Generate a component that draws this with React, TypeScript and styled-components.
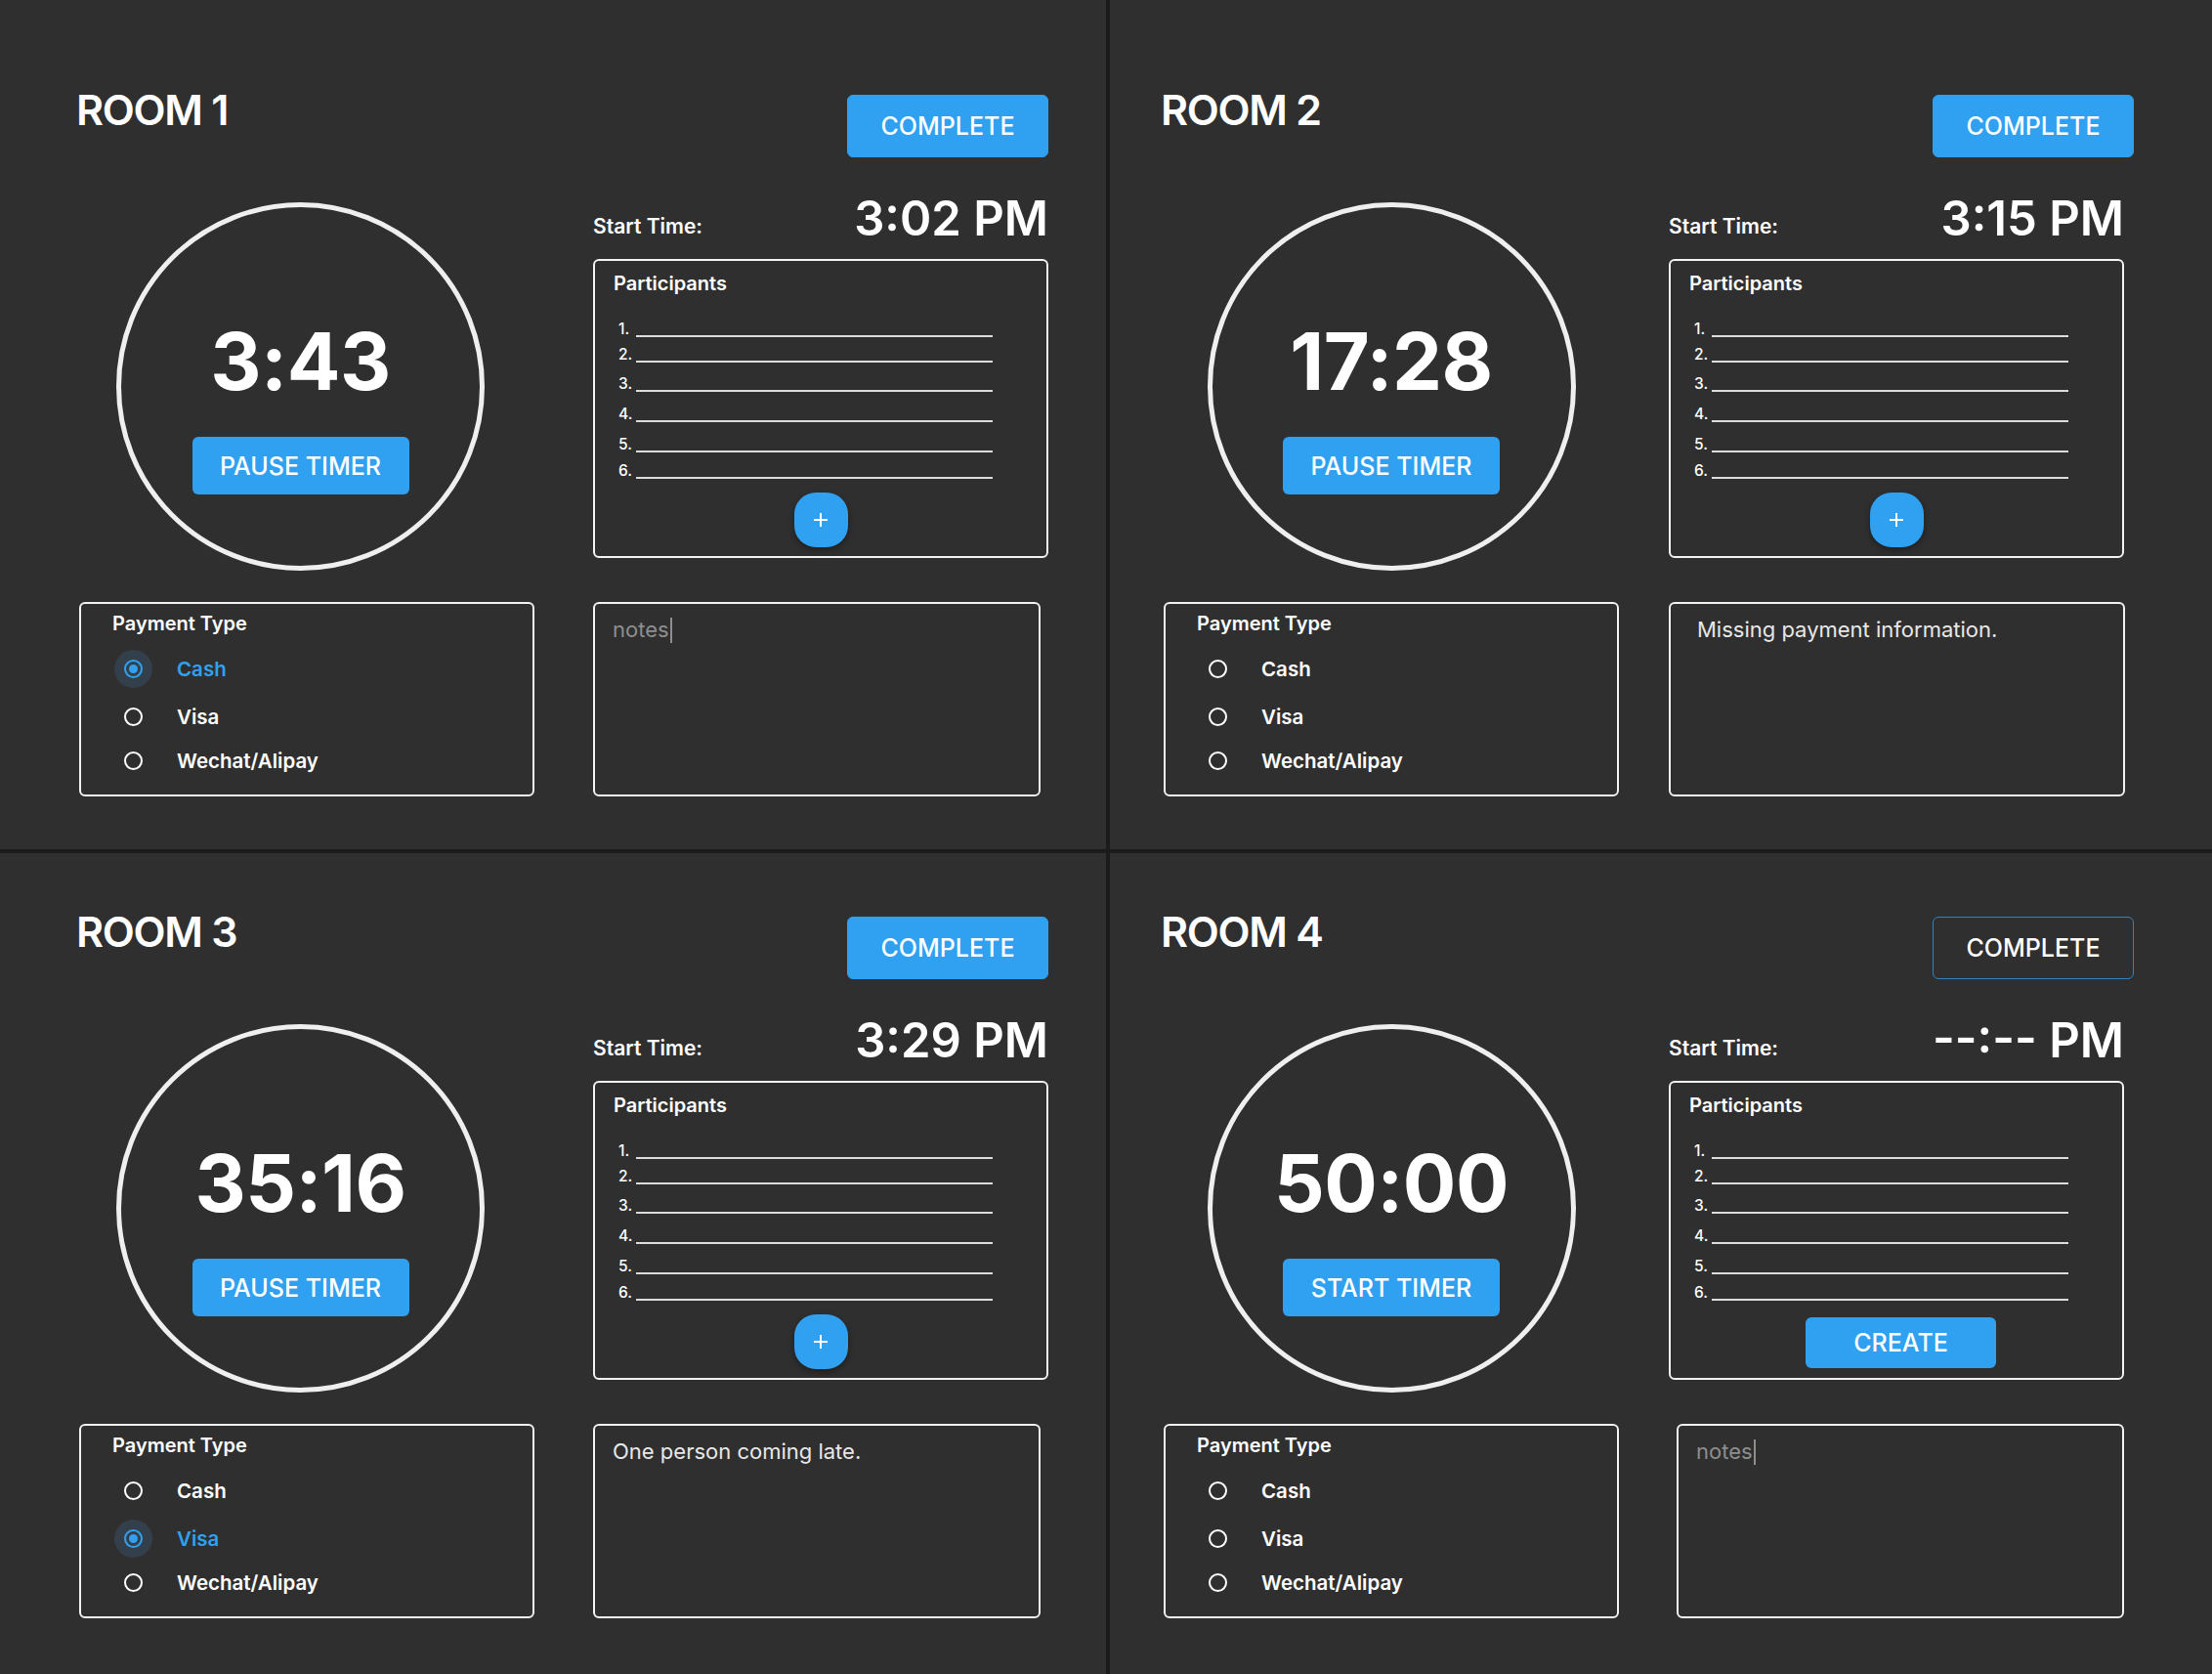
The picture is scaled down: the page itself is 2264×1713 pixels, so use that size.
import React from 'react'
import styled, { createGlobalStyle } from 'styled-components'

const GlobalStyle = createGlobalStyle`
  html, body {
    margin: 0;
    padding: 0;
    background: #1b1b1b;
  }
  body {
    font-family: Inter, "Noto Sans", "Liberation Sans", sans-serif;
    color: #ffffff;
  }
`

const BLUE = '#30a0f0'

const Board = styled.div`
  display: grid;
  grid-template-columns: 1132px 1fr;
  grid-template-rows: 869px 1fr;
  gap: 4px;
  width: 2264px;
  height: 1713px;
  background: #1b1b1b;
`

const RoomCell = styled.section<{ $padTop: number; $padLeft: number }>`
  background: #2f2f2f;
  padding: ${p => p.$padTop}px 0 0 ${p => p.$padLeft}px;
  box-sizing: border-box;
  overflow: hidden;
`

const Header = styled.div<{ $width: number }>`
  display: flex;
  justify-content: space-between;
  align-items: flex-start;
  width: ${p => p.$width}px;
  height: 64px;
  margin-bottom: 38px;
`

const Title = styled.h1`
  margin: -6px 0 0 -3px;
  font-size: 43px;
  line-height: 1;
  font-weight: 600;
  letter-spacing: -1.3px;
  color: #ffffff;
`

const CompleteButton = styled.button<{ $outlined?: boolean }>`
  width: 206px;
  height: 64px;
  border-radius: 6px;
  border: 1px solid ${p => (p.$outlined ? 'rgba(48, 160, 240, 0.75)' : BLUE)};
  background: ${p => (p.$outlined ? 'transparent' : BLUE)};
  color: #ffffff;
  font-family: Inter, sans-serif;
  font-size: 25px;
  font-weight: 500;
  text-transform: uppercase;
  padding: 0;
  cursor: pointer;
`

const Body = styled.div<{ $gap: number }>`
  display: grid;
  grid-template-columns: 466px 466px;
  column-gap: ${p => p.$gap}px;
  row-gap: 32px;
`

const TimerCell = styled.div<{ $shift: number }>`
  display: flex;
  justify-content: center;
  padding-top: 8px;
  padding-right: ${p => p.$shift}px;
`

const Dial = styled.div`
  width: 377px;
  height: 377px;
  box-sizing: border-box;
  border: 5px solid #efefef;
  border-radius: 50%;
  display: flex;
  flex-direction: column;
  align-items: center;
  padding-top: 118px;
`

const Clock = styled.div`
  font-size: 81px;
  line-height: 1;
  font-weight: 700;
  letter-spacing: -0.5px;
  color: #ffffff;
`

const TimerButton = styled.button`
  margin-top: 36px;
  width: 222px;
  height: 59px;
  border: none;
  border-radius: 6px;
  background: ${BLUE};
  color: #ffffff;
  font-family: Inter, sans-serif;
  font-size: 25px;
  font-weight: 500;
  text-transform: uppercase;
  padding: 0;
`

const RightCell = styled.div`
  display: flex;
  flex-direction: column;
`

const StartRow = styled.div`
  display: flex;
  justify-content: space-between;
  align-items: flex-end;
  height: 49px;
`

const StartLabel = styled.span`
  font-size: 21px;
  line-height: 1;
  font-weight: 600;
  margin-bottom: 6px;
  color: #ffffff;
`

const StartValue = styled.span`
  font-size: 49px;
  line-height: 1;
  font-weight: 600;
  color: #ffffff;
`

const Panel = styled.div<{ $height: number }>`
  box-sizing: border-box;
  height: ${p => p.$height}px;
  border: 2px solid #f2f2f2;
  border-radius: 6px;
`

const ParticipantsPanel = styled(Panel)`
  margin-top: 17px;
  display: flex;
  flex-direction: column;
  padding: 13px 0 0 19px;
`

const PanelTitle = styled.div`
  font-size: 20px;
  line-height: 1;
  height: 21px;
  font-weight: 600;
  color: #ffffff;
`

const SlotRow = styled.div<{ $h: number }>`
  display: flex;
  align-items: flex-end;
  height: ${p => p.$h}px;
  padding-left: 5px;
`

const SlotNumber = styled.span`
  width: 18px;
  font-size: 15.5px;
  line-height: 1;
  font-weight: 500;
  padding-bottom: 1px;
  color: #ffffff;
`

const SlotLine = styled.span`
  width: 365px;
  border-bottom: 2px solid #dcdcdc;
`

const AddButton = styled.button`
  align-self: center;
  margin: 14px 19px 0 0;
  width: 55px;
  height: 56px;
  border: none;
  border-radius: 22px;
  background: ${BLUE};
  box-shadow: 0 3px 6px rgba(0, 0, 0, 0.35);
  display: flex;
  align-items: center;
  justify-content: center;
  padding: 0;
`

const CreateButton = styled.button`
  align-self: center;
  margin: 17px 10px 0 0;
  width: 195px;
  height: 52px;
  border: none;
  border-radius: 6px;
  background: ${BLUE};
  color: #ffffff;
  font-family: Inter, sans-serif;
  font-size: 25px;
  font-weight: 500;
  padding: 0;
`

const PaymentPanel = styled(Panel)`
  padding: 10px 0 0 32px;
`

const RadioRow = styled.label<{ $mt: number }>`
  display: flex;
  align-items: center;
  margin-top: ${p => p.$mt}px;
  margin-left: 2px;
  height: 40px;
`

const RadioHalo = styled.span<{ $on: boolean }>`
  width: 39px;
  height: 39px;
  border-radius: 50%;
  background: ${p => (p.$on ? '#333f4a' : 'transparent')};
  display: flex;
  align-items: center;
  justify-content: center;
`

const RadioRing = styled.span<{ $on: boolean }>`
  width: 19px;
  height: 19px;
  box-sizing: border-box;
  border-radius: 50%;
  border: 2px solid ${p => (p.$on ? BLUE : '#ffffff')};
  display: flex;
  align-items: center;
  justify-content: center;
  &::after {
    content: '';
    display: ${p => (p.$on ? 'block' : 'none')};
    width: 9px;
    height: 9px;
    border-radius: 50%;
    background: ${BLUE};
  }
`

const RadioLabel = styled.span<{ $on: boolean }>`
  margin-left: 25px;
  font-size: 20.5px;
  font-weight: 600;
  color: ${p => (p.$on ? BLUE : '#ffffff')};
`

const NotesPanel = styled(Panel)<{ $w: number; $end: boolean; $pad: number }>`
  width: ${p => p.$w}px;
  justify-self: ${p => (p.$end ? 'end' : 'start')};
  padding: 13px 0 0 ${p => p.$pad}px;
  font-size: 22px;
  line-height: 1.2;
  font-weight: 400;
`

const NoteText = styled.span<{ $placeholder: boolean }>`
  color: ${p => (p.$placeholder ? '#8e8e8e' : '#e8e8e8')};
`

const Caret = styled.span`
  display: inline-block;
  width: 2px;
  height: 26px;
  margin-left: 1px;
  vertical-align: -6px;
  background: #8e8e8e;
`

interface RoomInfo {
  name: string
  clock: string
  action: string
  start: string
  selected: number
  notes?: string
  outlined?: boolean
  create?: boolean
}

const rooms: RoomInfo[] = [
  { name: 'ROOM 1', clock: '3:43', action: 'PAUSE TIMER', start: '3:02 PM', selected: 0 },
  { name: 'ROOM 2', clock: '17:28', action: 'PAUSE TIMER', start: '3:15 PM', selected: -1, notes: 'Missing payment information.' },
  { name: 'ROOM 3', clock: '35:16', action: 'PAUSE TIMER', start: '3:29 PM', selected: 1, notes: 'One person coming late.' },
  { name: 'ROOM 4', clock: '50:00', action: 'START TIMER', start: '--:-- PM', selected: -1, outlined: true, create: true },
]

const slotHeights = [44, 26, 30, 31, 31, 27]
const payments = ['Cash', 'Visa', 'Wechat/Alipay']
const radioGaps = [15, 9, 5]

const Plus = () => (
  <svg width="18" height="18" viewBox="0 0 18 18">
    <path d="M9 2v14M2 9h14" stroke="#ffffff" strokeWidth="2" />
  </svg>
)

const Room: React.FC<{ room: RoomInfo; index: number }> = ({ room, index }) => {
  const right = index % 2 === 1
  const bottom = index > 1
  const gap = right ? 51 : 60

  return (
    <RoomCell $padTop={bottom ? 65 : 97} $padLeft={right ? 55 : 81}>
      <Header $width={466 * 2 + gap + (right ? 10 : 0)}>
        <Title>{room.name}</Title>
        <CompleteButton $outlined={room.outlined}>Complete</CompleteButton>
      </Header>

      <Body $gap={gap}>
        <TimerCell $shift={right ? 0 : 13}>
          <Dial>
            <Clock>{room.clock}</Clock>
            <TimerButton>{room.action}</TimerButton>
          </Dial>
        </TimerCell>

        <RightCell>
          <StartRow>
            <StartLabel>Start Time:</StartLabel>
            <StartValue>{room.start}</StartValue>
          </StartRow>
          <ParticipantsPanel $height={306}>
            <PanelTitle>Participants</PanelTitle>
            {slotHeights.map((h, i) => (
              <SlotRow key={i} $h={h}>
                <SlotNumber>{i + 1}.</SlotNumber>
                <SlotLine />
              </SlotRow>
            ))}
            {room.create ? (
              <CreateButton>CREATE</CreateButton>
            ) : (
              <AddButton>
                <Plus />
              </AddButton>
            )}
          </ParticipantsPanel>
        </RightCell>

        <PaymentPanel $height={199}>
          <PanelTitle>Payment Type</PanelTitle>
          {payments.map((p, i) => (
            <RadioRow key={p} $mt={radioGaps[i]}>
              <RadioHalo $on={room.selected === i}>
                <RadioRing $on={room.selected === i} />
              </RadioHalo>
              <RadioLabel $on={room.selected === i}>{p}</RadioLabel>
            </RadioRow>
          ))}
        </PaymentPanel>

        <NotesPanel
          $height={199}
          $w={index === 1 ? 467 : 458}
          $end={index === 3}
          $pad={index === 1 ? 27 : 18}
        >
          {room.notes ? (
            <NoteText $placeholder={false}>{room.notes}</NoteText>
          ) : (
            <>
              <NoteText $placeholder>notes</NoteText>
              <Caret />
            </>
          )}
        </NotesPanel>
      </Body>
    </RoomCell>
  )
}

export default function App() {
  return (
    <>
      <GlobalStyle />
      <Board>
        {rooms.map((r, i) => (
          <Room key={r.name} room={r} index={i} />
        ))}
      </Board>
    </>
  )
}
